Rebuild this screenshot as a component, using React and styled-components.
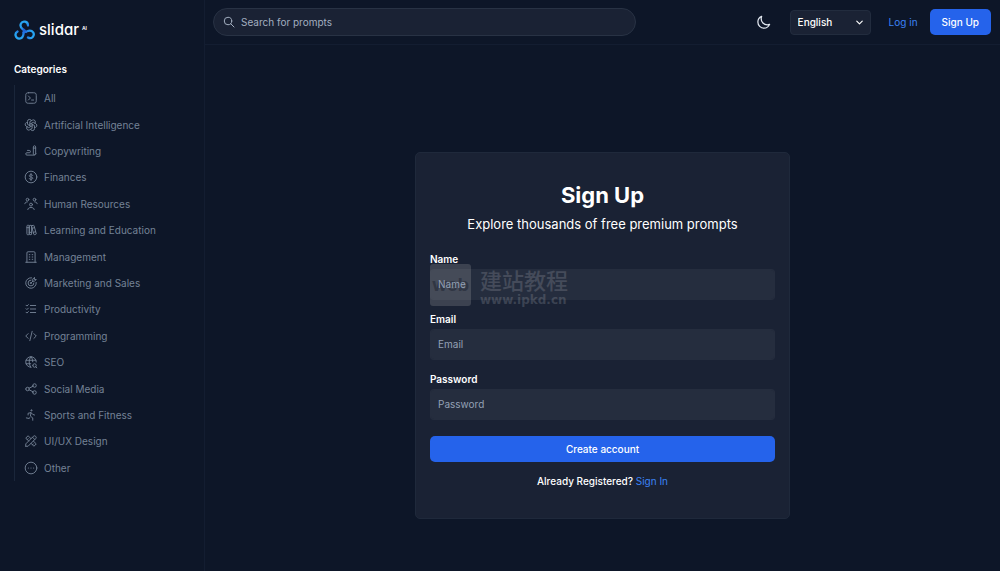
import React from 'react';
import styled, { createGlobalStyle } from 'styled-components';
import {
  TbBrandOpenai,
  TbWriting,
  TbBooks,
  TbBuilding,
  TbTargetArrow,
  TbListCheck,
  TbCode,
  TbWorldSearch,
  TbShare,
  TbRun,
  TbTools,
} from 'react-icons/tb';

const GlobalStyle = createGlobalStyle`
  * {
    box-sizing: border-box;
  }
  body {
    margin: 0;
    background-color: #0d1628;
    color: #fff;
    font-family: Inter, 'Liberation Sans', sans-serif;
    font-size: 10px;
    line-height: 16px;
  }
  a {
    color: #3b82f6;
    text-decoration: none;
  }
  button, input, select {
    font: inherit;
  }
`;

const Layout = styled.div`
  display: grid;
  grid-template-columns: 205px 1fr;
  min-height: 100vh;
`;

const Sidebar = styled.aside`
  padding: 18px 14px;
  border-right: 1px solid #131d31;
`;

const Logo = styled.a`
  display: flex;
  align-items: center;
  gap: 4px;
  height: 23px;
  color: #fff;
`;

const LogoText = styled.span`
  font-size: 15px;
  font-weight: 500;
  font-feature-settings: 'cv11';
  line-height: 20px;
`;

const LogoBadge = styled.span`
  margin-left: -1px;
  padding-bottom: 3px;
  font-size: 5px;
  font-weight: 600;
  line-height: 8px;
`;

const SidebarTitle = styled.h2`
  margin: 20px 0 8px;
  font-size: 10px;
  font-weight: 600;
  line-height: 16px;
`;

const CategoryList = styled.ul`
  display: grid;
  grid-auto-rows: 1fr;
  min-height: 396px;
  margin: 0;
  padding: 0 0 0 9px;
  border-left: 1px solid #1a263a;
  list-style: none;
`;

const CategoryItem = styled.li`
  display: flex;
`;

const CategoryLink = styled.a`
  display: flex;
  align-items: center;
  gap: 6px;
  color: #748296;

  svg {
    width: 14px;
    height: 14px;
    stroke-width: 1.6;
  }
`;

const Content = styled.div`
  display: flex;
  flex-direction: column;
  min-width: 0;
`;

const Header = styled.header`
  display: flex;
  align-items: center;
  justify-content: space-between;
  height: 45px;
  padding: 0 9px 0 8px;
  border-bottom: 1px solid #131d31;
`;

const Search = styled.label`
  display: flex;
  align-items: center;
  flex: 0 1 423px;
  gap: 6px;
  height: 28px;
  padding: 0 9px;
  border: 1px solid #283244;
  border-radius: 14px;
  background-color: #1a2234;
  color: #a3afc0;
`;

const SearchInput = styled.input`
  flex: 1;
  min-width: 0;
  padding: 0;
  border: none;
  outline: none;
  background: none;
  color: #fff;

  &::placeholder {
    color: #a3afc0;
    opacity: 1;
  }
`;

const Actions = styled.div`
  display: flex;
  align-items: center;
`;

const IconButton = styled.button`
  display: flex;
  margin-right: 19px;
  padding: 0;
  border: none;
  background: none;
  color: #e2e8f0;
`;

const SelectBox = styled.div`
  display: grid;
  align-items: center;
  margin-right: 18px;

  > * {
    grid-area: 1 / 1;
  }
  svg {
    justify-self: end;
    margin-right: 6px;
    pointer-events: none;
  }
`;

const Select = styled.select`
  appearance: none;
  width: 81px;
  height: 25px;
  padding: 0 7px;
  border: 1px solid #222c3e;
  border-radius: 4px;
  background-color: #1a2234;
  color: #fff;
  font-weight: 500;
`;

const Button = styled.button`
  width: ${({ $wide }) => ($wide ? '100%' : 'auto')};
  height: 26px;
  padding: 0 12px;
  border: none;
  border-radius: 5px;
  background-color: #2563eb;
  color: #fff;
  font-weight: 500;
`;

const LoginLink = styled.a`
  margin-right: 12px;
`;

const Main = styled.main`
  display: flex;
  flex: 1;
  align-items: flex-start;
  justify-content: center;
  padding-top: 107px;
`;

const Card = styled.section`
  position: relative;
  width: 100%;
  max-width: 375px;
  padding: 26px 14px 29px;
  border: 1px solid #1f293b;
  border-radius: 5px;
  background-color: #1a2234;
  text-align: center;
`;

const Title = styled.h1`
  margin: 0 0 3px;
  font-size: 22px;
  font-weight: 700;
  line-height: 32px;
`;

const Subtitle = styled.p`
  margin: 0 0 17px;
  font-size: 13px;
  line-height: 20px;
`;

const Form = styled.form`
  position: relative;
  display: flex;
  flex-direction: column;
  gap: 11px;
  margin-bottom: 11px;
`;

const Field = styled.div`
  display: flex;
  flex-direction: column;
  gap: 2px;
  text-align: left;
`;

const Label = styled.label`
  font-weight: 600;
`;

const Input = styled.input`
  height: 31px;
  padding: 0 7px 1px;
  border: 1px solid rgba(255, 255, 255, 0.05);
  border-radius: 4px;
  outline: none;
  background-color: rgba(255, 255, 255, 0.05);
  background-clip: padding-box;
  color: #fff;

  &::placeholder {
    color: #94a1b5;
    opacity: 1;
  }
`;

const Submit = styled.div`
  display: flex;
  padding-top: 5px;
`;

const Note = styled.p`
  margin: 0;
  font-weight: 500;

  a {
    font-weight: 400;
  }
`;

const Watermark = styled.div`
  position: absolute;
  top: 111px;
  left: 14px;
  display: flex;
  align-items: flex-start;
  gap: 9px;
  color: #3b4252;
  pointer-events: none;
`;

const WatermarkTile = styled.span`
  width: 41px;
  border-radius: 3px;
  background-color: #3c4250;
  color: #252c3a;
  font-size: 18px;
  font-weight: 700;
  line-height: 42px;
`;

const WatermarkText = styled.span`
  display: flex;
  flex-direction: column;
  font-family: 'DejaVu Sans', sans-serif;
  font-size: 12px;
  font-weight: 700;
  line-height: 12px;
  text-align: left;
`;

const WatermarkName = styled.span`
  font-family: 'Noto Sans CJK SC', sans-serif;
  font-size: 22px;
  font-weight: 500;
  line-height: 30px;
`;

const strokeProps = {
  viewBox: '0 0 24 24',
  fill: 'none',
  stroke: 'currentColor',
  strokeWidth: 1.5,
  strokeLinecap: 'round',
  strokeLinejoin: 'round',
};

const PromptIcon = () => (
  <svg {...strokeProps}>
    <path d="M8 3h8c4 0 5 1 5 5v8c0 4-1 5-5 5H8c-4 0-5-1-5-5V8c0-4 1-5 5-5z" />
    <path d="M7.5 8.500l3.500 3.500-3.500 3.500M13 15.500h3.500" />
  </svg>
);

const DollarIcon = () => (
  <svg {...strokeProps}>
    <circle cx="12" cy="12" r="10" />
    <path d="M12 6v12M15 9.500c-.5-1-1.600-1.500-3-1.500-1.700 0-3 .8-3 2s1.300 1.700 3 2 3 .9 3 2-1.300 2-3 2-2.600-.5-3-1.500" />
  </svg>
);

const PeopleIcon = () => (
  <svg {...strokeProps}>
    <circle cx="6" cy="4.500" r="2.300" />
    <circle cx="18" cy="4.500" r="2.300" />
    <circle cx="12" cy="13" r="2.500" />
    <path d="M1.500 11.500c.3-2 1.500-3 4-3M22.500 11.500c-.3-2-1.500-3-4-3M6.500 21.500c.5-2.500 2.500-3.500 5.500-3.500s5 1 5.500 3.500" />
  </svg>
);

const OtherIcon = () => (
  <svg {...strokeProps}>
    <circle cx="12" cy="12" r="10" />
    <path d="M7.500 12v.01M12 12v.01M16.500 12v.01" strokeWidth="2" />
  </svg>
);

const SearchIcon = () => (
  <svg {...strokeProps} width="12" height="12" strokeWidth="2">
    <circle cx="10" cy="10" r="7.500" />
    <path d="M15.500 15.500L22 22" />
  </svg>
);

const MoonIcon = () => (
  <svg {...strokeProps} width="15" height="15" strokeWidth="2">
    <path d="M21.752 15.002A9.718 9.718 0 0 1 18 15.750 9.750 9.750 0 0 1 8.250 6c0-1.330.266-2.597.748-3.752A9.753 9.753 0 0 0 3 11.250 9.750 9.750 0 0 0 12.750 21a9.753 9.753 0 0 0 9.002-5.998z" />
  </svg>
);

const ChevronIcon = () => (
  <svg {...strokeProps} width="11" height="11" strokeWidth="2.500">
    <path d="M6 9l6 6 6-6" />
  </svg>
);

const LogoIcon = () => (
  <svg width="21" height="20" viewBox="0 0 42 40" fill="none" strokeWidth="4.500" strokeLinecap="round">
    <defs>
      <linearGradient id="loop" gradientUnits="userSpaceOnUse" x1="12" y1="4" x2="26" y2="26">
        <stop offset="0.300" stopColor="#27a4f2" />
        <stop offset="1" stopColor="#1d4fd0" />
      </linearGradient>
    </defs>
    {[0, 120, 240].map((angle) => (
      <path
        key={angle}
        d="M28 11C28 2 17 1 14 7c-3 6 0 9 4 12l6 5"
        stroke="url(#loop)"
        transform={`rotate(${angle} 21 23)`}
      />
    ))}
  </svg>
);

const categories = [
  { name: 'All', Icon: PromptIcon },
  { name: 'Artificial Intelligence', Icon: TbBrandOpenai },
  { name: 'Copywriting', Icon: TbWriting },
  { name: 'Finances', Icon: DollarIcon },
  { name: 'Human Resources', Icon: PeopleIcon },
  { name: 'Learning and Education', Icon: TbBooks },
  { name: 'Management', Icon: TbBuilding },
  { name: 'Marketing and Sales', Icon: TbTargetArrow },
  { name: 'Productivity', Icon: TbListCheck },
  { name: 'Programming', Icon: TbCode },
  { name: 'SEO', Icon: TbWorldSearch },
  { name: 'Social Media', Icon: TbShare },
  { name: 'Sports and Fitness', Icon: TbRun },
  { name: 'UI/UX Design', Icon: TbTools },
  { name: 'Other', Icon: OtherIcon },
];

const TextField = ({ id, label, type = 'text' }) => (
  <Field>
    <Label htmlFor={id}>{label}</Label>
    <Input id={id} type={type} placeholder={label} />
  </Field>
);

const App = () => (
  <>
    <GlobalStyle />
    <Layout>
      <Sidebar>
        <Logo href="#">
          <LogoIcon />
          <LogoText>slidar</LogoText>
          <LogoBadge>AI</LogoBadge>
        </Logo>
        <SidebarTitle>Categories</SidebarTitle>
        <CategoryList>
          {categories.map(({ name, Icon }) => (
            <CategoryItem key={name}>
              <CategoryLink href="#">
                <Icon />
                {name}
              </CategoryLink>
            </CategoryItem>
          ))}
        </CategoryList>
      </Sidebar>
      <Content>
        <Header>
          <Search>
            <SearchIcon />
            <SearchInput type="search" aria-label="Search" placeholder="Search for prompts" />
          </Search>
          <Actions>
            <IconButton type="button" aria-label="Toggle theme">
              <MoonIcon />
            </IconButton>
            <SelectBox>
              <Select aria-label="Language">
                <option>English</option>
              </Select>
              <ChevronIcon />
            </SelectBox>
            <LoginLink href="#">Log in</LoginLink>
            <Button type="button">Sign Up</Button>
          </Actions>
        </Header>
        <Main>
          <Card>
            <Watermark aria-hidden="true">
              <WatermarkTile>web</WatermarkTile>
              <WatermarkText>
                <WatermarkName>建站教程</WatermarkName>
                www.ipkd.cn
              </WatermarkText>
            </Watermark>
            <Title>Sign Up</Title>
            <Subtitle>Explore thousands of free premium prompts</Subtitle>
            <Form>
              <TextField id="name" label="Name" />
              <TextField id="email" label="Email" type="email" />
              <TextField id="password" label="Password" type="password" />
              <Submit>
                <Button type="submit" $wide>
                  Create account
                </Button>
              </Submit>
            </Form>
            <Note>
              Already Registered? <a href="#">Sign In</a>
            </Note>
          </Card>
        </Main>
      </Content>
    </Layout>
  </>
);

export default App;
